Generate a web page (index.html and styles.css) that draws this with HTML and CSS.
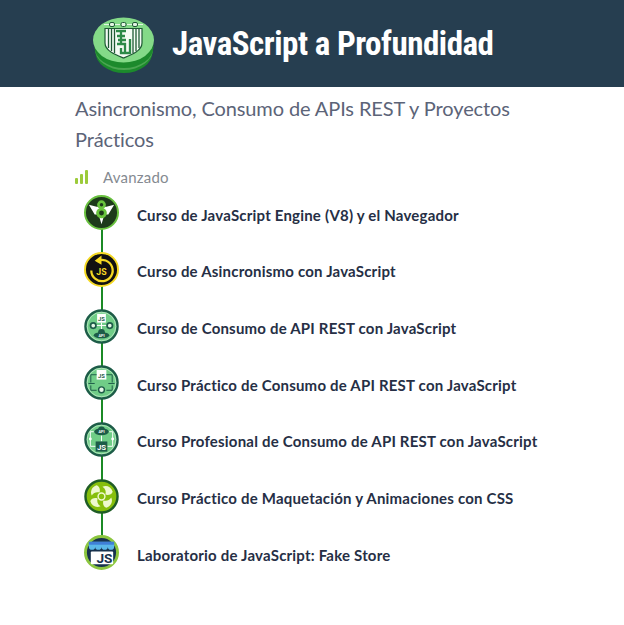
FILE: index.html
```html
<!DOCTYPE html>
<html lang="es">
<head>
<meta charset="utf-8">
<title>JavaScript a Profundidad</title>
<link rel="stylesheet" href="styles.css">
</head>
<body>
<header class="hero">
  <svg class="badge" width="62" height="60" viewBox="0 0 62 60">
    <ellipse cx="31" cy="38" rx="28.500" ry="21" fill="#1c8a2c"/>
    <ellipse cx="31" cy="35" rx="29" ry="21" fill="#4aa551"/>
    <ellipse cx="31" cy="33" rx="29.500" ry="21" fill="#1c8a2c"/>
    <ellipse cx="30.500" cy="26" rx="30.500" ry="22.500" fill="#84da88"/>
    <path d="M12 14.500 H49 V29 C49 37 38 41 30.500 44 C23 41 12 37 12 29 Z" fill="#f4fbf4" stroke="#1f5a35" stroke-width="1.200"/>
    <path d="M15.500 15 V34 M18.500 15 V37 M21.500 15 V39 M40 15 V39 M43 15 V37 M46 15 V34" stroke="#1f5a35" stroke-width="1.300" fill="none"/>
    <path d="M23 17 H33 M28 17 V30 M24 22 H32 M24 30 H33 M25 26 H33 M37 25 V39 H28 V34 M32 39 V29" stroke="#2c8a48" stroke-width="2.300" fill="none"/>
    <g fill="#e3f6e3" stroke="#1f5a35" stroke-width="1">
      <rect x="16.500" y="8.500" width="5" height="4" rx="1.500"/>
      <rect x="28" y="8.500" width="5" height="4" rx="1.500"/>
      <rect x="39.500" y="8.500" width="5" height="4" rx="1.500"/>
    </g>
    <path d="M11 10.500 H16 M22 10.500 H27 M34 10.500 H39 M45 10.500 H50" stroke="#e3f6e3" stroke-width="1"/>
  </svg>
  <h1 class="hero-title">JavaScript a Profundidad</h1>
</header>
<main class="content">
  <h2 class="subtitle">Asincronismo, Consumo de APIs REST y Proyectos Prácticos</h2>
  <div class="level">
    <svg class="level-icon" width="14" height="14" viewBox="0 0 14 14">
      <rect x="0" y="8" width="3" height="6" rx="1" fill="#9ccb3b"/>
      <rect x="5" y="4" width="3" height="10" rx="1" fill="#9ccb3b"/>
      <rect x="10" y="0" width="3" height="14" rx="1" fill="#9ccb3b"/>
    </svg>
    <span>Avanzado</span>
  </div>
  <ol class="courses">
    <li class="course">
      <svg class="course-icon" viewBox="0 0 36 36">
        <circle cx="18" cy="18" r="17" fill="#1d3a1a" stroke="#69c13f" stroke-width="2"/>
        <path d="M5 10 L13 12 L23 12 L31 10 L25 20 L21 20 L18 30 L15 20 L11 20 Z" fill="#fff"/>
        <circle cx="18" cy="10" r="4.500" fill="#68c43c"/>
        <circle cx="18" cy="18.500" r="5.500" fill="#68c43c"/>
        <circle cx="18" cy="10" r="1.800" fill="#1d3a1a"/>
        <circle cx="18" cy="18.500" r="2.500" fill="#1d3a1a"/>
      </svg>
      <span class="course-name">Curso de JavaScript Engine (V8) y el Navegador</span>
    </li>
    <li class="course">
      <svg class="course-icon" viewBox="0 0 36 36">
        <circle cx="18" cy="18" r="17" fill="#111" stroke="#f5d923" stroke-width="2"/>
        <path d="M13 9.500 A11 11 0 1 1 7.500 19" fill="none" stroke="#f5d923" stroke-width="2.300"/>
        <path d="M18 3.500 L18 13 L11 9 Z" fill="#f5d923"/>
        <text x="18" y="23.500" class="icon-label icon-label-gold">JS</text>
      </svg>
      <span class="course-name">Curso de Asincronismo con JavaScript</span>
    </li>
    <li class="course">
      <svg class="course-icon" viewBox="0 0 36 36">
        <circle cx="18" cy="18" r="16.500" fill="#70cd87" stroke="#1d5c48" stroke-width="2.500"/>
        <circle cx="18" cy="18" r="14.700" fill="none" stroke="#c3ecc9" stroke-width="0.800"/>
        <rect x="13.500" y="5" width="9" height="9" fill="#fff"/>
        <text x="18" y="12" class="icon-label icon-label-tiny">JS</text>
        <path d="M18 14 V23 M10 17 H26" stroke="#fff" stroke-width="1"/>
        <circle cx="9.500" cy="17" r="2.800" fill="#e6f7e6" stroke="#1d5c48" stroke-width="1.800"/>
        <circle cx="26.500" cy="17" r="2.800" fill="#e6f7e6" stroke="#1d5c48" stroke-width="1.800"/>
        <ellipse cx="18" cy="27" rx="8" ry="3.200" fill="#1d5c48"/>
        <circle cx="18" cy="24" r="3.500" fill="#1d5c48"/>
        <text x="18" y="28.500" class="icon-label icon-label-micro">API</text>
      </svg>
      <span class="course-name">Curso de Consumo de API REST con JavaScript</span>
    </li>
    <li class="course">
      <svg class="course-icon" viewBox="0 0 36 36">
        <circle cx="18" cy="18" r="16.500" fill="#70cd87" stroke="#1d5c48" stroke-width="2.500"/>
        <circle cx="18" cy="18" r="14.700" fill="none" stroke="#c3ecc9" stroke-width="0.800"/>
        <rect x="13" y="5" width="10" height="10" fill="#fff"/>
        <text x="18" y="13" class="icon-label icon-label-tiny">JS</text>
        <path d="M13 10 H7 V18 M23 10 H29 V18 M4.500 19 H11 M25 19 H31.500 M7 21 V26 H13 M29 21 V26 H23" stroke="#1d5c48" stroke-width="1" fill="none"/>
        <circle cx="18" cy="25.500" r="3" fill="#e6f7e6" stroke="#1d5c48" stroke-width="1.500"/>
      </svg>
      <span class="course-name">Curso Práctico de Consumo de API REST con JavaScript</span>
    </li>
    <li class="course">
      <svg class="course-icon" viewBox="0 0 36 36">
        <circle cx="18" cy="18" r="16.500" fill="#70cd87" stroke="#1d5c48" stroke-width="2.500"/>
        <circle cx="18" cy="18" r="14.700" fill="none" stroke="#c3ecc9" stroke-width="0.800"/>
        <ellipse cx="18" cy="10" rx="7.500" ry="3.500" fill="#1d5c48"/>
        <circle cx="18" cy="8" r="3.500" fill="#1d5c48"/>
        <text x="18" y="11.500" class="icon-label icon-label-micro">API</text>
        <path d="M10 10 H6.500 V25 H12 M26 10 H29.500 V25 H24" stroke="#fff" stroke-width="1" fill="none"/>
        <circle cx="6.500" cy="17.500" r="1.500" fill="#fff"/>
        <circle cx="29.500" cy="17.500" r="1.500" fill="#fff"/>
        <path d="M18 14 V20" stroke="#fff" stroke-width="1"/>
        <rect x="12" y="20" width="12" height="10.500" fill="#1d5c48"/>
        <text x="18" y="28.500" class="icon-label icon-label-small">JS</text>
      </svg>
      <span class="course-name">Curso Profesional de Consumo de API REST con JavaScript</span>
    </li>
    <li class="course">
      <svg class="course-icon" viewBox="0 0 36 36">
        <circle cx="18" cy="18" r="16.500" fill="#86bf0c" stroke="#1f5d26" stroke-width="2.500"/>
        <g fill="#eef9cf">
          <path d="M16 14 C13 13 10 14 8 17 C6 13 8 8 13 6.500 C16 7.500 17 11 16 14 Z"/>
          <path d="M22 16 C23 13 22 10 19 8 C23 6 28 8 29.500 13 C28.500 16 25 17 22 16 Z"/>
          <path d="M20 22 C23 23 26 22 28 19 C30 23 28 28 23 29.500 C20 28.500 19 25 20 22 Z"/>
          <path d="M14 20 C13 23 14 26 17 28 C13 30 8 28 6.500 23 C7.500 20 11 19 14 20 Z"/>
        </g>
        <circle cx="18" cy="18" r="3.500" fill="#86bf0c" stroke="#eef9cf" stroke-width="1.500"/>
      </svg>
      <span class="course-name">Curso Práctico de Maquetación y Animaciones con CSS</span>
    </li>
    <li class="course">
      <svg class="course-icon" viewBox="0 0 36 36">
        <circle cx="18" cy="18" r="16.500" fill="#17324d" stroke="#8cc63f" stroke-width="3"/>
        <path d="M5 7 H31 V12 A3.200 3.200 0 0 1 24.500 12 A3.200 3.200 0 0 1 18 12 A3.200 3.200 0 0 1 11.500 12 A3.200 3.200 0 0 1 5 12 Z" fill="#5bb8e8"/>
        <rect x="5" y="7" width="26" height="3" fill="#3f7fd6"/>
        <rect x="7" y="17" width="23" height="13" rx="1" fill="#fff"/>
        <text x="21" y="28.500" class="icon-label icon-label-dark">JS</text>
      </svg>
      <span class="course-name">Laboratorio de JavaScript: Fake Store</span>
    </li>
  </ol>
</main>
</body>
</html>
```

FILE: styles.css
```css
* {
  box-sizing: border-box;
}

html,
body {
  margin: 0;
  padding: 0;
  background: #fff;
}

body {
  font-family: Lato, "Liberation Sans", sans-serif;
  font-variant-ligatures: none;
  color: #282c3f;
}

.hero {
  height: 87px;
  background: #263e50;
  display: flex;
  align-items: center;
  gap: 17px;
  padding-left: 93px;
}

.badge {
  flex: none;
}

.hero-title {
  margin: 0;
  font-family: Roboto, sans-serif;
  font-size: 33px;
  font-stretch: 85%;
  font-weight: 700;
  letter-spacing: -0.470px;
  color: #fff;
}

.content {
  padding: 6px 0 0 75px;
}

.subtitle {
  margin: 0;
  width: 470px;
  font-size: 20px;
  line-height: 31px;
  font-weight: 400;
  letter-spacing: -0.11px;
  color: #5c6478;
}

.level {
  display: flex;
  align-items: center;
  gap: 14px;
  margin-top: 13px;
  height: 18px;
  font-size: 15px;
  letter-spacing: 0.2px;
  color: #858a91;
}

.level-icon {
  flex: none;
}

.courses {
  list-style: none;
  margin: 0.400px 0 0;
  padding: 0 0 0 9px;
}

.course {
  position: relative;
  display: flex;
  align-items: center;
  gap: 18px;
  height: 56.700px;
}

.course:not(:last-child)::after {
  content: "";
  position: absolute;
  left: 16.500px;
  top: 40px;
  width: 2.500px;
  height: 34px;
  background: #1b8a25;
}

.course-icon {
  flex: none;
  width: 35px;
  height: 35px;
  margin-bottom: 4px;
  position: relative;
  z-index: 1;
}

.course-name {
  font-size: 15px;
  font-weight: 700;
  letter-spacing: 0.2px;
  color: #262f45;
}

.icon-label {
  font-family: Roboto, "Liberation Sans", sans-serif;
  font-weight: 700;
  text-anchor: middle;
}

.icon-label-gold {
  font-size: 9px;
  fill: #f5d923;
}

.icon-label-tiny {
  font-size: 6px;
  fill: #1d5c48;
}

.icon-label-micro {
  font-size: 4px;
  fill: #fff;
}

.icon-label-small {
  font-size: 8px;
  fill: #fff;
}

.icon-label-dark {
  font-size: 14px;
  fill: #17324d;
}
```
